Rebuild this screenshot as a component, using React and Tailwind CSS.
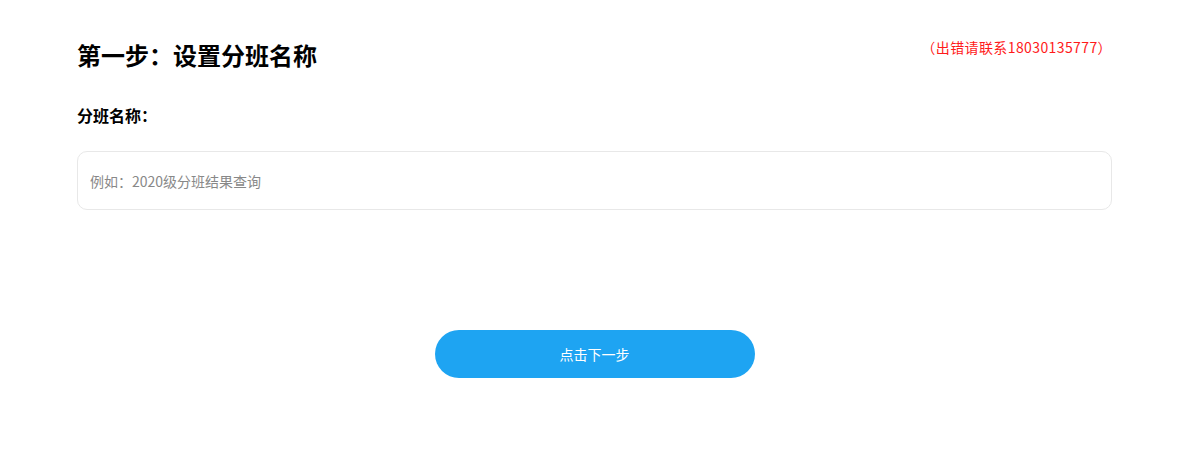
export default function App() {
  return (
    <div className="min-h-screen bg-white" style={{ fontFamily: '"Noto Sans CJK SC", "Noto Sans", sans-serif' }}>
      <div className="ml-[77px] w-[1035px] pt-[38px]">
        <div className="flex items-start justify-between">
          <h1 className="text-[24px] font-bold leading-[34px] text-black">第一步：设置分班名称</h1>
          <span className="mt-[-1px] mr-0 text-[14px] leading-[20px] tracking-[0.4px] text-[#ff1a1a]">（出错请联系18030135777）</span>
        </div>
        <div className="mt-[32px] text-[16px] font-bold leading-[22px] text-black">分班名称：</div>
        <input
          type="text"
          placeholder="例如：2020级分班结果查询"
          className="mt-[25px] block h-[59px] w-full rounded-[10px] border border-[#e8e8e8] px-[12px] text-[14px] text-[#333] outline-none placeholder:text-[#888]"
        />
        <div className="mt-[120px] flex justify-center">
          <button className="h-[48px] w-[320px] rounded-full bg-[#1ea4f2] text-[14px] text-white">点击下一步</button>
        </div>
      </div>
    </div>
  )
}
